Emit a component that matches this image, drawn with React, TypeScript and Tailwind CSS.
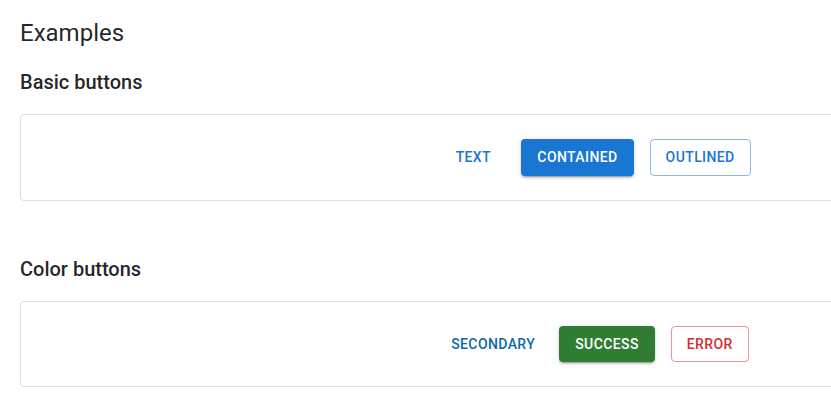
import React from "react";

const base =
  "inline-flex items-center justify-center min-w-[64px] rounded-[4px] text-[14px] font-medium leading-[24.5px] tracking-[0.4px] uppercase";
const shadow =
  "shadow-[0px_3px_1px_-2px_rgba(0,0,0,0.2),0px_2px_2px_0px_rgba(0,0,0,0.14),0px_1px_5px_0px_rgba(0,0,0,0.12)]";

function Box({ children }: { children: React.ReactNode }) {
  return (
    <div className="w-[1152px] shrink-0 border border-[#e0e0e0] rounded-[4px] p-[24px] flex justify-center items-center gap-[16px]">
      {children}
    </div>
  );
}

export default function App() {
  return (
    <div
      className="w-[831px] h-[407px] overflow-hidden bg-white text-[rgba(0,0,0,0.87)] pl-[20px]"
      style={{ fontFamily: "Roboto, 'Liberation Sans', sans-serif" }}
    >
      <h1 className="text-[24px] leading-[32px] font-normal pt-[17px]">Examples</h1>
      <h2 className="text-[20px] leading-[28px] font-medium mt-[19px]">Basic buttons</h2>
      <div className="mt-[18px]">
        <Box>
          <button className={`${base} px-[8px] py-[6px] text-[#1976d2]`}>Text</button>
          <button className={`${base} px-[16px] py-[6px] bg-[#1976d2] text-white ${shadow}`}>Contained</button>
          <button className={`${base} px-[15px] py-[5px] border border-[rgba(25,118,210,0.5)] text-[#1976d2]`}>Outlined</button>
        </Box>
      </div>
      <h2 className="text-[20px] leading-[28px] font-medium mt-[54px]">Color buttons</h2>
      <div className="mt-[18px]">
        <Box>
          <button className={`${base} px-[8px] py-[6px] text-[#0b6aa8]`}>Secondary</button>
          <button className={`${base} px-[16px] py-[6px] bg-[#2e7d32] text-white ${shadow}`}>Success</button>
          <button className={`${base} px-[15px] py-[5px] border border-[rgba(211,47,47,0.5)] text-[#d32f2f]`}>Error</button>
        </Box>
      </div>
    </div>
  );
}
